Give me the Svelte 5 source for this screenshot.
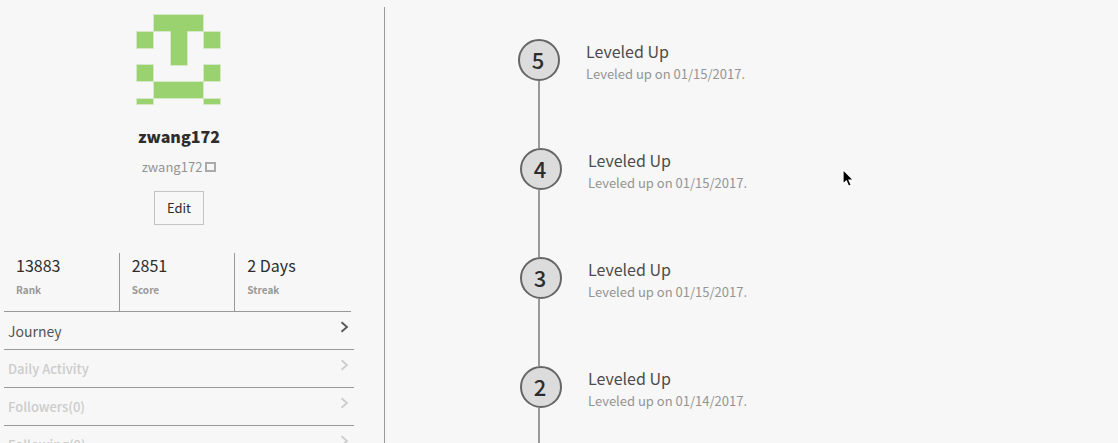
<script>
  const stats = [
    { value: '13883', label: 'Rank' },
    { value: '2851', label: 'Score' },
    { value: '2 Days', label: 'Streak' }
  ];
  const links = ['Journey', 'Daily Activity', 'Followers(0)', 'Following(0)'];
  const levels = [
    { level: 5, date: '01/15/2017' },
    { level: 4, date: '01/15/2017' },
    { level: 3, date: '01/15/2017' },
    { level: 2, date: '01/14/2017' }
  ];
  let active = $state('Journey');
</script>

<div class="page">
  <aside>
    <section class="profile">
      <svg class="avatar" width="86" height="92" viewBox="0 0 86 92" aria-hidden="true">
        <g fill="#99d26f" stroke="#d5e9c7" stroke-width="1">
          <path d="M17.5 .5h50v17h-16v34h-17v-34h-17z" />
          <path d="M.5 17.5h17v17h-17zM67.5 17.5h17v17h-17zM.5 50.5h17v17h-17zM67.5 50.5h17v17h-17z" />
          <path d="M17.5 67.5h50v17h-50zM.5 84.5h17v6h-17zM67.5 84.5h17v6h-17z" />
        </g>
      </svg>
      <h1>zwang172</h1>
      <p class="handle">zwang172 <span class="flag"></span></p>
      <button class="edit" type="button">Edit</button>
    </section>

    <dl class="stats">
      {#each stats as stat}
        <div class="stat">
          <dd>{stat.value}</dd>
          <dt>{stat.label}</dt>
        </div>
      {/each}
    </dl>

    <nav>
      {#each links as link}
        <a href="#top" class:active={active === link} onclick={() => (active = link)}>
          <span>{link}</span>
          <svg width="9" height="12" viewBox="0 0 9 12" aria-hidden="true">
            <path d="M1.5 1.2L7 6 1.5 10.8" fill="none" stroke="currentColor" stroke-width="1.8" />
          </svg>
        </a>
      {/each}
    </nav>
  </aside>

  <main>
    <ol>
      {#each levels as item}
        <li>
          <div class="entry">
            <span class="badge">{item.level}</span>
            <div class="text">
              <h2>Leveled Up</h2>
              <p>Leveled up on {item.date}.</p>
            </div>
          </div>
          <div class="connector"></div>
        </li>
      {/each}
    </ol>
  </main>

  <svg class="pointer" width="14" height="20" viewBox="0 0 14 20" aria-hidden="true">
    <path d="M2 1.5v14.5l3.3-3 2.3 5.2 2.6-1.1-2.2-5.1h4.5z" fill="#000" stroke="#fff" stroke-width="1.2" />
  </svg>
</div>

<style>
  :global(body) {
    margin: 0;
    background: #f7f7f7;
  }
  .page {
    display: flex;
    position: relative;
    box-sizing: border-box;
    height: 100vh;
    padding-top: 7px;
    overflow: hidden;
    background: #f7f7f7;
    color: #2d2d2d;
    font-family: "Noto Sans CJK SC", "Noto Sans", sans-serif;
  }
  h1, h2, p, dl, dd, dt, ol {
    margin: 0;
    padding: 0;
  }
  aside {
    flex: 0 0 385px;
    box-sizing: border-box;
    padding: 7px 30px 0 4px;
    border-right: 1px solid #999;
  }
  .profile {
    display: flex;
    flex-direction: column;
    align-items: center;
  }
  .avatar {
    display: block;
  }
  h1 {
    margin-top: 18px;
    font-size: 16px;
    line-height: 24px;
    font-weight: 900;
  }
  .handle {
    display: flex;
    align-items: center;
    gap: 3px;
    margin-top: 9px;
    font-size: 13px;
    line-height: 20px;
    color: #949494;
  }
  .flag {
    box-sizing: border-box;
    width: 11px;
    height: 10px;
    border: 2px solid #aaa;
  }
  .edit {
    box-sizing: border-box;
    width: 50px;
    height: 34px;
    margin-top: 14px;
    padding: 0 0 2px;
    border: 1px solid #c4c4c4;
    background: transparent;
    color: #2d2d2d;
    font-family: inherit;
    font-size: 13px;
  }
  .stats {
    display: grid;
    grid-template-columns: repeat(3, 1fr);
    margin: 28px 3px 0 0;
    border-bottom: 1px solid #999;
  }
  .stat {
    display: flex;
    flex-direction: column;
    box-sizing: border-box;
    height: 58px;
    padding-left: 12px;
    border-right: 1px solid #999;
  }
  .stat:last-child {
    border-right: 0;
  }
  dd {
    font-size: 16px;
    line-height: 24px;
  }
  dt {
    margin-top: 5px;
    font-size: 10px;
    line-height: 16px;
    font-weight: 700;
    color: #999;
  }
  nav a {
    display: flex;
    justify-content: space-between;
    box-sizing: border-box;
    height: 38px;
    padding: 9px 5px 0 4px;
    border-bottom: 1px solid #999;
    color: #ccc;
    font-size: 13px;
    line-height: 20px;
    font-weight: 500;
    text-decoration: none;
  }
  nav a.active {
    color: #555;
    font-size: 14px;
    font-weight: 400;
  }
  main {
    flex: 1;
    padding: 32px 0 0 133px;
  }
  ol {
    list-style: none;
  }
  .entry {
    display: flex;
    gap: 26px;
    height: 42px;
  }
  li + li .entry {
    padding-left: 2px;
  }
  .badge {
    display: flex;
    align-items: center;
    justify-content: center;
    box-sizing: border-box;
    width: 42px;
    height: 42px;
    padding: 0 2px 2px 0;
    border: 2px solid #666;
    border-radius: 50%;
    background: #dcdcdc;
    font-size: 22px;
    line-height: 32px;
    font-weight: 500;
  }
  h2 {
    font-size: 16px;
    line-height: 24px;
    font-weight: 400;
    color: #4c4c4c;
  }
  .text p {
    font-size: 13px;
    line-height: 22px;
    color: #949494;
  }
  .connector {
    width: 2px;
    height: 67px;
    margin-left: 20px;
    background: #999;
  }
  .pointer {
    position: absolute;
    top: 168px;
    left: 841px;
  }
</style>
